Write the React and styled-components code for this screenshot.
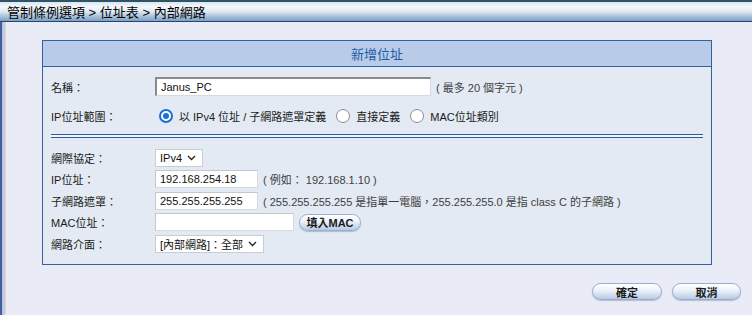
import React from "react";
import styled, { createGlobalStyle } from "styled-components";

const Global = createGlobalStyle`
  html, body { margin: 0; padding: 0; }
  body {
    background: #e9ecf6;
    font-family: "Liberation Sans", "Noto Sans CJK TC", Arial, sans-serif;
    font-size: 11px;
    color: #1a1a1a;
    width: 752px;
    height: 315px;
    overflow: hidden;
  }
`;

const Page = styled.div`
  width: 752px;
  height: 315px;
  display: flex;
  flex-direction: column;
`;

const TopBar = styled.div`
  height: 19px;
  border-top: 2px solid #2d5566;
  border-bottom: 1px solid #27466e;
  background: linear-gradient(
    to bottom,
    #d9e6ef 0%,
    #f4f8fb 25%,
    #dfe9f3 50%,
    #a9c2dc 75%,
    #7d9fc6 100%
  );
  display: flex;
  align-items: center;
  padding-left: 7px;
  font-size: 13px;
  color: #000;
`;

const Main = styled.div`
  flex: 1;
  display: flex;
`;

const LeftStripe = styled.div`
  width: 6px;
  background: linear-gradient(to right, #3d5fa6 0, #3d5fa6 2px, #b9bfcc 2px, #d7dbe4 6px);
`;

const Content = styled.div`
  flex: 1;
  padding: 18px 11px 0 36px;
  display: flex;
  flex-direction: column;
`;

const Panel = styled.div`
  width: 668px;
  border: 1px solid #34609f;
  background: #e3eaf3;
`;

const PanelHeader = styled.div`
  height: 25px;
  background: #b8cbe9;
  border-bottom: 1px solid #34609f;
  display: flex;
  align-items: center;
  justify-content: center;
  color: #1e5ca8;
  font-size: 13px;
`;

const PanelBody = styled.div`
  padding: 5px 8px 10px 8px;
  display: flex;
  flex-direction: column;
`;

const Row = styled.div`
  display: flex;
  align-items: center;
  height: ${(p) => p.$h || 21}px;
`;

const Label = styled.div`
  width: 104px;
  flex: none;
  color: #1a1a1a;
`;

const Field = styled.div`
  display: flex;
  align-items: center;
  gap: ${(p) => p.$gap || 5}px;
`;

const TextInput = styled.input`
  box-sizing: border-box;
  width: ${(p) => p.$w}px;
  height: ${(p) => p.$hgt || 18}px;
  padding: 0 4px;
  margin: 0;
  font-family: "Liberation Sans", "Noto Sans CJK TC", Arial, sans-serif;
  font-size: 11px;
  color: #111;
  background: #fff;
  border: 1px solid #d6d9de;
  border-top: ${(p) => (p.$inset ? "2px solid #8a8a8a" : "1px solid #c4c7cc")};
  border-left: ${(p) => (p.$inset ? "2px solid #8a8a8a" : "1px solid #c4c7cc")};
  outline: none;
`;

const Hint = styled.span`
  color: #404040;
  white-space: nowrap;
`;

const Separator = styled.div`
  margin: 4px 0 9px 0;
  height: 2px;
  border-top: 1px solid #2f5b9c;
  border-bottom: 1px solid #2f5b9c;
  background: #f2f5fa;
`;

const RadioGroup = styled.div`
  display: flex;
  align-items: center;
  gap: 10px;
  padding-left: 4px;
`;

const RadioItem = styled.label`
  display: flex;
  align-items: center;
  gap: 6px;
  white-space: nowrap;
`;

const RadioDot = styled.span`
  box-sizing: border-box;
  width: 14px;
  height: 14px;
  border-radius: 50%;
  flex: none;
  background: #fff;
  border: ${(p) => (p.$on ? "2px solid #1d6fd6" : "1px solid #8a8d92")};
  display: flex;
  align-items: center;
  justify-content: center;
  &::after {
    content: "";
    width: 6px;
    height: 6px;
    border-radius: 50%;
    background: ${(p) => (p.$on ? "#1d6fd6" : "transparent")};
  }
`;

const SelectBox = styled.div`
  box-sizing: border-box;
  width: ${(p) => p.$w}px;
  height: 18px;
  background: #fff;
  border: 1px solid #c9ccd1;
  display: flex;
  align-items: center;
  justify-content: space-between;
  padding: 0 6px 0 4px;
  color: #111;
  white-space: nowrap;
`;

const PillButton = styled.button`
  box-sizing: border-box;
  width: ${(p) => p.$w}px;
  height: 17px;
  border-radius: 9px;
  border: 1px solid #97afcc;
  background: linear-gradient(to bottom, #ffffff 0%, #eef3fa 40%, #cfdcee 75%, #b6c9e3 100%);
  font-family: "Liberation Sans", "Noto Sans CJK TC", Arial, sans-serif;
  font-size: 11px;
  font-weight: bold;
  color: #1a1a1a;
  padding: 0;
  display: flex;
  align-items: center;
  justify-content: center;
  box-shadow: 0 1px 1px rgba(80, 100, 140, 0.35);
`;

const Actions = styled.div`
  display: flex;
  justify-content: flex-end;
  gap: 10px;
  margin-top: 18px;
`;

const Chevron = () => (
  <svg width="9" height="6" viewBox="0 0 9 6">
    <path d="M1 1 L4.5 4.5 L8 1" fill="none" stroke="#222" strokeWidth="1.3" />
  </svg>
);

export default function App() {
  return (
    <>
      <Global />
      <Page>
        <TopBar>管制條例選項 &gt; 位址表 &gt; 內部網路</TopBar>
        <Main>
          <LeftStripe />
          <Content>
            <Panel>
              <PanelHeader>新增位址</PanelHeader>
              <PanelBody>
                <Row $h={29}>
                  <Label>名稱：</Label>
                  <Field>
                    <TextInput $w={276} $hgt={19} $inset defaultValue="Janus_PC" />
                    <Hint>( 最多 20 個字元 )</Hint>
                  </Field>
                </Row>
                <Row $h={29}>
                  <Label>IP位址範圍：</Label>
                  <RadioGroup>
                    <RadioItem>
                      <RadioDot $on />
                      以 IPv4 位址 / 子網路遮罩定義
                    </RadioItem>
                    <RadioItem>
                      <RadioDot />
                      直接定義
                    </RadioItem>
                    <RadioItem>
                      <RadioDot />
                      MAC位址類別
                    </RadioItem>
                  </RadioGroup>
                </Row>
                <Separator />
                <Row>
                  <Label>網際協定：</Label>
                  <SelectBox $w={48}>
                    IPv4 <Chevron />
                  </SelectBox>
                </Row>
                <Row $h={22}>
                  <Label>IP位址：</Label>
                  <Field>
                    <TextInput $w={103} defaultValue="192.168.254.18" />
                    <Hint>( 例如： 192.168.1.10 )</Hint>
                  </Field>
                </Row>
                <Row $h={21}>
                  <Label>子網路遮罩：</Label>
                  <Field>
                    <TextInput $w={103} defaultValue="255.255.255.255" />
                    <Hint>( 255.255.255.255 是指單一電腦，255.255.255.0 是指 class C 的子網路 )</Hint>
                  </Field>
                </Row>
                <Row $h={22}>
                  <Label>MAC位址：</Label>
                  <Field>
                    <TextInput $w={139} defaultValue="" />
                    <PillButton $w={62}>填入MAC</PillButton>
                  </Field>
                </Row>
                <Row $h={21}>
                  <Label>網路介面：</Label>
                  <SelectBox $w={109}>
                    [內部網路]：全部 <Chevron />
                  </SelectBox>
                </Row>
              </PanelBody>
            </Panel>
            <Actions>
              <PillButton $w={70}>確定</PillButton>
              <PillButton $w={69}>取消</PillButton>
            </Actions>
          </Content>
        </Main>
      </Page>
    </>
  );
}
